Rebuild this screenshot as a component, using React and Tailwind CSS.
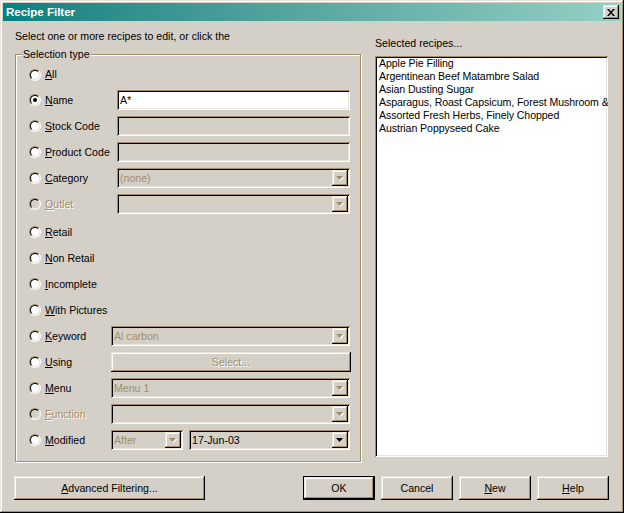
import React from 'react'

const RAISED =
  'shadow-[inset_-1px_-1px_#000,inset_1px_1px_#e8e4dc,inset_-2px_-2px_#a28d68,inset_2px_2px_#fff]'
const SUNKEN =
  'shadow-[inset_1px_1px_#a28d68,inset_-1px_-1px_#fff,inset_2px_2px_#000,inset_-2px_-2px_#e8e4dc]'

function Key({ text, u, disabled }) {
  const parts =
    u === undefined ? (
      text
    ) : (
      <>
        {text.slice(0, u)}
        <span className="underline underline-offset-[1px]">{text[u]}</span>
        {text.slice(u + 1)}
      </>
    )
  return (
    <span className={disabled ? 'text-[#a28d68] [text-shadow:1px_1px_0_#fff]' : 'text-black'}>
      {parts}
    </span>
  )
}

function Radio({ checked, disabled }) {
  return (
    <span className="flex w-3 h-3 shrink-0 rounded-full border border-t-[#a28d68] border-l-[#a28d68] border-b-white border-r-white">
      <span
        className={`flex flex-1 items-center justify-center rounded-full border border-t-black border-l-black border-b-[#e8e4dc] border-r-[#e8e4dc] ${
          disabled ? 'bg-[#d4d0c8]' : 'bg-white'
        }`}
      >
        {checked && <span className="w-[4px] h-[4px] rounded-full bg-black" />}
      </span>
    </span>
  )
}

function Arrow({ disabled }) {
  return (
    <svg width="8" height="5" viewBox="0 0 8 5" className="block">
      {disabled && <path d="M1 1h7L4.5 5z" fill="#fff" />}
      <path d="M0 0h7L3.5 4z" fill={disabled ? '#a28d68' : '#000'} />
    </svg>
  )
}

function Combo({ w, value, disabled, textDisabled }) {
  return (
    <div className={`${w} h-[20px] flex items-center bg-[#d4d0c8] ${SUNKEN} pl-[3px] pr-[2px]`}>
      <span className={`flex-1 truncate ${textDisabled ? 'text-[#a28d68]' : 'text-black'}`}>{value}</span>
      <span className={`flex w-[16px] h-[16px] items-center justify-center bg-[#d4d0c8] ${RAISED}`}>
        <Arrow disabled={disabled} />
      </span>
    </div>
  )
}

function Field({ value, enabled }) {
  return (
    <div
      className={`w-[233px] h-[20px] flex items-center pl-[3px] ${SUNKEN} ${
        enabled ? 'bg-white' : 'bg-[#d4d0c8]'
      }`}
    >
      {value}
    </div>
  )
}

function Row({ label, u, checked, disabled, wide, tall, children }) {
  return (
    <div className={`flex items-center pl-[13px] ${tall ? 'h-[25px]' : 'h-[26px]'}`}>
      <div className={`flex items-center gap-[4px] shrink-0 ${wide ? 'w-[88px]' : 'w-[82px]'}`}>
        <Radio checked={checked} disabled={disabled} />
        <Key text={label} u={u} disabled={disabled} />
      </div>
      {children}
    </div>
  )
}

function Button({ children, w, isDefault }) {
  return (
    <div
      className={`${w} h-[24px] flex items-center justify-center bg-[#d4d0c8] ${
        isDefault ? 'border border-black' : ''
      } ${RAISED}`}
    >
      {children}
    </div>
  )
}

const recipes = [
  'Apple Pie Filling',
  'Argentinean Beef Matambre Salad',
  'Asian Dusting Sugar',
  'Asparagus, Roast Capsicum, Forest Mushroom &',
  'Assorted Fresh Herbs, Finely Chopped',
  'Austrian Poppyseed Cake',
]

export default function App() {
  return (
    <div className="w-[624px] h-[513px] flex flex-col p-[3px] bg-[#d4d0c8] text-[10.6px] leading-[13px] font-['Liberation_Sans',Arial,sans-serif] shadow-[inset_-1px_-1px_#000,inset_1px_1px_#e8e4dc,inset_-2px_-2px_#a28d68,inset_2px_2px_#fff] select-none">
      {/* title bar */}
      <div className="h-[18px] flex items-center justify-between pl-[3px] pr-[2px] bg-gradient-to-r from-[#008080] to-[#94d0c4]">
        <span className="text-white font-bold text-[11.5px]">Recipe Filter</span>
        <span className={`flex w-[16px] h-[14px] items-center justify-center bg-[#d4d0c8] ${RAISED}`}>
          <svg width="8" height="7" viewBox="0 0 8 7">
            <path d="M0 0h2l2 2.5L6 0h2L5 3.5 8 7H6L4 4.5 2 7H0l3-3.5z" fill="#000" />
          </svg>
        </span>
      </div>

      <div className="flex px-[12px]">
        {/* left column */}
        <div className="w-[347px] pt-[9px]">
          <div className="h-[13px]">Select one or more recipes to edit, or click the</div>
          <div className="relative mt-[11px] w-[346px] h-[408px] border border-[#a28d68] shadow-[1px_1px_0_#fff,inset_1px_1px_0_#fff] pt-[7px]">
            <span className="absolute -top-[7px] left-[6px] px-[1px] bg-[#d4d0c8]">Selection type</span>
            <Row label="All" u={0} tall />
            <Row label="Name" u={0} checked wide>
              <Field value="A*" enabled />
            </Row>
            <Row label="Stock Code" u={0} wide>
              <Field />
            </Row>
            <Row label="Product Code" u={0} wide>
              <Field />
            </Row>
            <Row label="Category" u={0} wide>
              <Combo w="w-[233px]" value="(none)" disabled textDisabled />
            </Row>
            <Row label="Outlet" u={0} disabled wide>
              <Combo w="w-[233px]" value="" disabled />
            </Row>
            <div className="h-[2px]" />
            <Row label="Retail" u={0} />
            <Row label="Non Retail" u={0} />
            <Row label="Incomplete" u={0} />
            <Row label="With Pictures" u={0} />
            <Row label="Keyword" u={0}>
              <Combo w="w-[239px]" value="Al carbon" disabled textDisabled />
            </Row>
            <Row label="Using" u={0}>
              <div className={`w-[240px] h-[20px] flex items-center justify-center bg-[#d4d0c8] ${RAISED}`}>
                <Key text="Select..." disabled />
              </div>
            </Row>
            <Row label="Menu" u={0}>
              <Combo w="w-[239px]" value="Menu 1" disabled textDisabled />
            </Row>
            <Row label="Function" u={0} disabled>
              <Combo w="w-[239px]" value="" disabled />
            </Row>
            <Row label="Modified" u={0}>
              <div className="flex gap-[6px]">
                <Combo w="w-[72px]" value="After" disabled textDisabled />
                <Combo w="w-[161px]" value="17-Jun-03" />
              </div>
            </Row>
          </div>
        </div>

        {/* right column */}
        <div className="ml-[13px] w-[233px] pt-[16px]">
          <div className="h-[13px]">Selected recipes...</div>
          <div className={`mt-[6px] h-[401px] bg-white ${SUNKEN} pl-[4px] pr-[2px] pt-[1px] overflow-hidden tracking-[-0.08px]`}>
            {recipes.map(r => (
              <div key={r} className="whitespace-nowrap">
                {r}
              </div>
            ))}
          </div>
        </div>
      </div>

      {/* buttons */}
      <div className="flex items-center mt-[14px] pl-[11px] pr-[12px]">
        <Button w="w-[191px]">
          <Key text="Advanced Filtering..." u={0} />
        </Button>
        <div className="ml-auto flex gap-[6px]">
          <Button w="w-[72px]" isDefault>OK</Button>
          <Button w="w-[72px]">Cancel</Button>
          <Button w="w-[72px]">
            <Key text="New" u={0} />
          </Button>
          <Button w="w-[72px]">
            <Key text="Help" u={0} />
          </Button>
        </div>
      </div>
    </div>
  )
}
